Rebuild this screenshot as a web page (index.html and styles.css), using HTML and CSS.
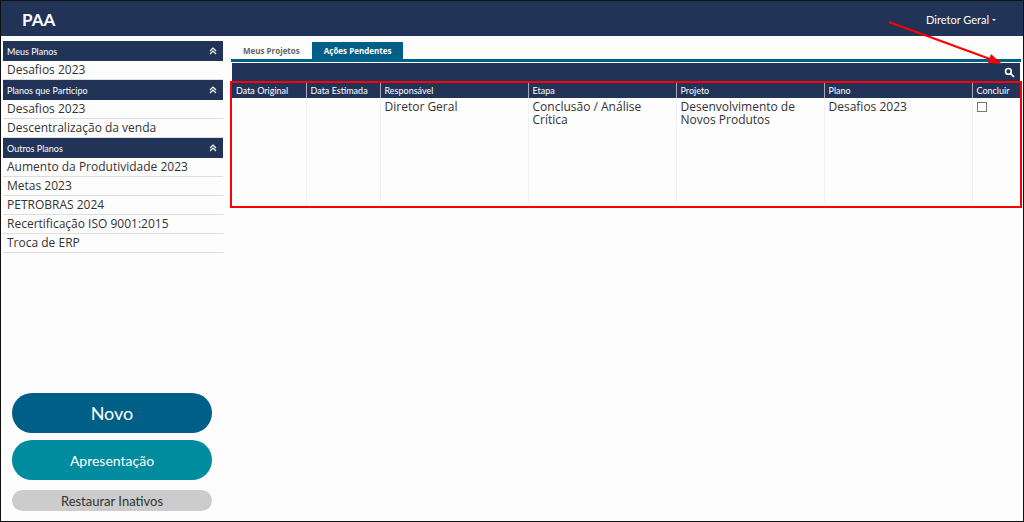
FILE: index.html
```html
<!DOCTYPE html>
<html lang="pt-BR">
<head>
    <meta charset="UTF-8">
    <meta name="viewport" content="width=device-width, initial-scale=1.0">
    <title>PAA</title>
    <link rel="stylesheet" href="styles.css">
</head>
<body>
    <header class="topbar">
        <h1 class="brand">PAA</h1>
        <button class="user-menu" type="button">Diretor Geral <span class="caret"></span></button>
    </header>

    <div class="layout">
        <aside class="sidebar">
            <nav class="plans">
                <button class="plans-title" type="button">Meus Planos
                    <svg class="chevron" viewBox="0 0 8 8"><path d="M1 4l3-3 3 3M1 7l3-3 3 3"/></svg>
                </button>
                <ul class="plans-list">
                    <li><a href="#">Desafios 2023</a></li>
                </ul>
                <button class="plans-title" type="button">Planos que Participo
                    <svg class="chevron" viewBox="0 0 8 8"><path d="M1 4l3-3 3 3M1 7l3-3 3 3"/></svg>
                </button>
                <ul class="plans-list">
                    <li><a href="#">Desafios 2023</a></li>
                    <li><a href="#">Descentralização da venda</a></li>
                </ul>
                <button class="plans-title" type="button">Outros Planos
                    <svg class="chevron" viewBox="0 0 8 8"><path d="M1 4l3-3 3 3M1 7l3-3 3 3"/></svg>
                </button>
                <ul class="plans-list">
                    <li><a href="#">Aumento da Produtividade 2023</a></li>
                    <li><a href="#">Metas 2023</a></li>
                    <li><a href="#">PETROBRAS 2024</a></li>
                    <li><a href="#">Recertificação ISO 9001:2015</a></li>
                    <li><a href="#">Troca de ERP</a></li>
                </ul>
            </nav>
            <div class="actions">
                <button class="btn btn-new" type="button">Novo</button>
                <button class="btn btn-show" type="button">Apresentação</button>
                <button class="btn btn-restore" type="button">Restaurar Inativos</button>
            </div>
        </aside>

        <main class="content">
            <div class="tabs">
                <a class="tab" href="#">Meus Projetos</a>
                <a class="tab active" href="#">Ações Pendentes</a>
            </div>
            <div class="toolbar">
                <button class="search" type="button" aria-label="Pesquisar">
                    <svg viewBox="0 0 10 10"><circle cx="4" cy="4" r="2.6"/><path d="M6 6l3 3"/></svg>
                </button>
                <svg class="arrow" viewBox="0 0 116 46">
                    <path class="arrow-line" d="M2 2L103 39"/>
                    <path class="arrow-head" d="M115 44L101 43L104 34Z"/>
                </svg>
            </div>
            <div class="highlight">
                <table class="pending">
                    <colgroup>
                        <col class="col-date">
                        <col class="col-date">
                        <col>
                        <col>
                        <col>
                        <col>
                        <col class="col-done">
                    </colgroup>
                    <thead>
                        <tr>
                            <th>Data Original</th>
                            <th>Data Estimada</th>
                            <th>Responsável</th>
                            <th>Etapa</th>
                            <th>Projeto</th>
                            <th>Plano</th>
                            <th>Concluir</th>
                        </tr>
                    </thead>
                    <tbody>
                        <tr>
                            <td></td>
                            <td></td>
                            <td>Diretor Geral</td>
                            <td>Conclusão / Análise Crítica</td>
                            <td>Desenvolvimento de Novos Produtos</td>
                            <td>Desafios 2023</td>
                            <td><input class="check" type="checkbox" aria-label="Concluir"></td>
                        </tr>
                    </tbody>
                </table>
            </div>
        </main>
    </div>
</body>
</html>
```

FILE: styles.css
```css
* {
    box-sizing: border-box;
}
body {
    margin: 0;
    min-height: 100vh;
    display: flex;
    flex-direction: column;
    border: 1px solid #111;
    background-color: #fdfdfd;
    color: #333;
    font-family: "Open Sans", "Noto Sans", sans-serif;
    font-size: 12px;
}
button {
    border: 0;
    padding: 0;
    background: none;
    color: #fff;
    font-family: "Century Gothic", Lato, sans-serif;
    cursor: pointer;
}
a {
    color: inherit;
    text-decoration: none;
}
.topbar {
    display: flex;
    justify-content: space-between;
    align-items: center;
    height: 35px;
    padding: 0 27px 0 21px;
    background-color: #223358;
    color: #fff;
}
.brand {
    margin: 0;
    padding-top: 2px;
    font-family: "Century Gothic", Lato, sans-serif;
    font-size: 17px;
    line-height: 20px;
}
.user-menu {
    display: flex;
    align-items: center;
    gap: 3px;
    padding-top: 2px;
    font-size: 11px;
}
.caret {
    border: 2px solid transparent;
    border-top-color: #fff;
    border-bottom: 0;
}
.layout {
    flex: 1;
    display: flex;
    gap: 8px;
    padding: 5px 2px 10px;
}
.sidebar {
    flex: 0 0 220px;
    display: flex;
    flex-direction: column;
    justify-content: space-between;
}
.plans-title {
    display: flex;
    justify-content: space-between;
    align-items: center;
    width: 100%;
    height: 20px;
    padding: 0 6px 0 4px;
    background-color: #223358;
    font-size: 9px;
}
.chevron {
    width: 8px;
    height: 8px;
    fill: none;
    stroke: #fff;
    stroke-width: 1.2;
}
.plans-list {
    margin: 0;
    padding: 0;
    list-style: none;
}
.plans-list a {
    display: block;
    height: 19px;
    padding-left: 4px;
    border-bottom: 1px solid #ddd;
    line-height: 17px;
}
.actions {
    display: flex;
    flex-direction: column;
    gap: 7px;
    padding: 0 11px 0 9px;
}
.btn {
    height: 40px;
    border-radius: 20px;
}
.btn-new {
    background-color: #005f87;
    font-size: 18px;
}
.btn-show {
    background-color: #008c9e;
    font-size: 14px;
}
.btn-restore {
    height: 21px;
    margin-top: 3px;
    background-color: #ccc;
    color: #333;
    font-size: 13px;
}
.content {
    flex: 1;
    min-width: 0;
}
.tabs {
    display: flex;
    padding-top: 1px;
    border-bottom: 3px solid #005f87;
}
.tab {
    padding: 0 12px;
    color: #666;
    font-size: 8px;
    font-weight: bold;
    line-height: 17px;
}
.tab.active {
    background-color: #005f87;
    color: #fff;
}
.toolbar {
    position: relative;
    display: flex;
    justify-content: flex-end;
    align-items: center;
    height: 18px;
    margin: 1px 1px 0;
    padding-right: 5px;
    background-color: #223358;
}
.search {
    width: 11px;
    height: 11px;
}
.search svg {
    display: block;
    fill: none;
    stroke: #fff;
    stroke-width: 1.5;
}
.arrow {
    position: absolute;
    right: 17px;
    bottom: 15px;
    width: 116px;
    height: 46px;
}
.arrow-line {
    stroke: #f00;
    stroke-width: 2;
}
.arrow-head {
    fill: #f00;
}
.highlight {
    margin: 2px 1px 0;
    outline: 2px solid #f00;
}
.pending {
    width: 100%;
    border-collapse: collapse;
    table-layout: fixed;
}
.col-date {
    width: 74px;
}
.col-done {
    width: 48px;
}
.pending th {
    height: 15px;
    padding: 0 4px;
    border-left: 1px solid #aab;
    background-color: #223358;
    color: #fff;
    font-family: "Century Gothic", Lato, sans-serif;
    font-size: 9px;
    font-weight: normal;
    line-height: 14px;
    text-align: left;
    white-space: nowrap;
}
.pending td {
    height: 108px;
    padding: 2px 4px;
    border-left: 1px solid #f2f2f2;
    line-height: 13px;
    vertical-align: top;
}
.pending th:first-child,
.pending td:first-child {
    border-left: 0;
}
.check {
    appearance: none;
    display: block;
    width: 10px;
    height: 10px;
    margin: 2px 0 0;
    border: 1px solid #777;
    background-color: #fff;
}
```
